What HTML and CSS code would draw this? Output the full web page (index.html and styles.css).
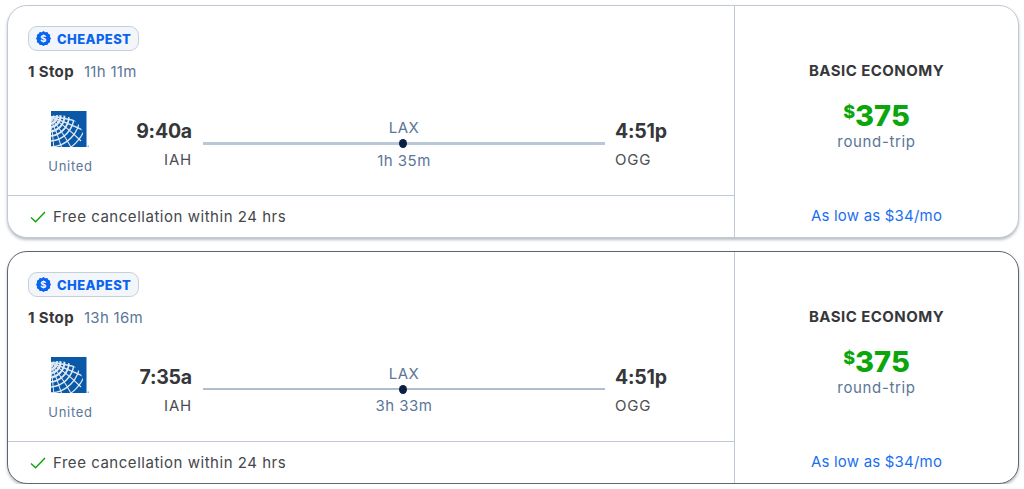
FILE: index.html
```html
<!DOCTYPE html>
<html lang="en">
<head>
<meta charset="utf-8">
<title>Flights</title>
<link rel="stylesheet" href="styles.css">
</head>
<body>
<svg class="defs" width="0" height="0" aria-hidden="true">
  <defs>
    <clipPath id="globe"><circle cx="8" cy="29" r="25"/></clipPath>
    <clipPath id="square"><rect width="35" height="36"/></clipPath>
    <symbol id="united" viewBox="0 0 38 38">
      <rect width="35" height="36" fill="#0a58a8"/>
      <rect x="35" width="1" height="36" fill="#7fa8d4"/>
      <rect x="36.5" y="34.5" width="1.5" height="1.5" fill="#8fb0d6"/>
      <g clip-path="url(#square)">
        <g clip-path="url(#globe)">
          <g fill="none" stroke="#dfe9f4">
            <circle cx="-2" cy="5" r="4" stroke-width="3"/>
            <circle cx="-2" cy="5" r="8" stroke-width="2.4"/>
            <circle cx="-2" cy="5" r="11.5" stroke-width="2.2"/>
            <circle cx="-2" cy="5" r="15.5" stroke-width="2"/>
            <circle cx="-2" cy="5" r="20" stroke-width="1.8"/>
            <circle cx="-2" cy="5" r="25" stroke-width="1.5"/>
            <circle cx="-2" cy="5" r="31" stroke-width="1.3"/>
            <circle cx="-2" cy="5" r="38" stroke-width="1.2"/>
            <path d="M-2 5Q12 7 36 12" stroke-width="1.6"/>
            <path d="M-2 5Q14 11 34 20" stroke-width="1.4"/>
            <path d="M-2 5Q14 14 30 30" stroke-width="1.2"/>
            <path d="M-2 5Q10 18 21 38" stroke-width="1.1"/>
            <path d="M-2 5Q6 20 11 38" stroke-width="1.1"/>
            <path d="M-2 5Q2 20 3 38" stroke-width="1"/>
          </g>
        </g>
      </g>
    </symbol>
    <symbol id="badge" viewBox="0 0 16 16">
      <path fill="#0a64f0" d="M8 0l1.9 1.2 2.2-.2 1 2 2 1-.2 2.2L16 8l-1.1 1.8.2 2.2-2 1-1 2-2.2-.2L8 16l-1.9-1.2-2.2.2-1-2-2-1 .2-2.2L0 8l1.1-1.8L.9 4l2-1 1-2 2.2.2z"/>
      <text x="8" y="11.6" text-anchor="middle" class="badge-dollar">$</text>
    </symbol>
  </defs>
</svg>

<main class="list">
  <article class="card card-plain">
    <div class="main">
      <div class="details">
        <span class="tag"><svg class="tag-icon"><use href="#badge"/></svg>CHEAPEST</span>
        <p class="summary"><b class="stops">1 Stop</b><span class="total">11h 11m</span></p>
        <div class="route">
          <div class="airline"><svg class="logo"><use href="#united"/></svg><span>United</span></div>
          <div class="point point-dep"><strong>9:40a</strong><span>IAH</span></div>
          <div class="leg">
            <span class="via">LAX</span>
            <div class="line"><i class="dot"></i></div>
            <span class="layover">1h 35m</span>
          </div>
          <div class="point"><strong>4:51p</strong><span>OGG</span></div>
        </div>
      </div>
      <div class="perk"><svg class="check" viewBox="0 0 16 12"><path d="M1 6.4l4.6 4.4L15 1"/></svg>Free cancellation within 24 hrs</div>
    </div>
    <aside class="fare">
      <h3>BASIC ECONOMY</h3>
      <div class="price"><sup>$</sup>375</div>
      <div class="trip">round-trip</div>
      <a class="finance">As low as $34/mo</a>
    </aside>
  </article>

  <article class="card card-hover">
    <div class="main">
      <div class="details">
        <span class="tag"><svg class="tag-icon"><use href="#badge"/></svg>CHEAPEST</span>
        <p class="summary"><b class="stops">1 Stop</b><span class="total">13h 16m</span></p>
        <div class="route">
          <div class="airline"><svg class="logo"><use href="#united"/></svg><span>United</span></div>
          <div class="point point-dep"><strong>7:35a</strong><span>IAH</span></div>
          <div class="leg">
            <span class="via">LAX</span>
            <div class="line"><i class="dot"></i></div>
            <span class="layover">3h 33m</span>
          </div>
          <div class="point"><strong>4:51p</strong><span>OGG</span></div>
        </div>
      </div>
      <div class="perk"><svg class="check" viewBox="0 0 16 12"><path d="M1 6.4l4.6 4.4L15 1"/></svg>Free cancellation within 24 hrs</div>
    </div>
    <aside class="fare">
      <h3>BASIC ECONOMY</h3>
      <div class="price"><sup>$</sup>375</div>
      <div class="trip">round-trip</div>
      <a class="finance">As low as $34/mo</a>
    </aside>
  </article>
</main>
</body>
</html>
```

FILE: styles.css
```css
* { box-sizing: border-box; }
html, body { margin: 0; background: #fff; }
body {
  font-family: Inter, "Open Sans", sans-serif;
  color: #36373a;
  overflow: hidden;
}
.defs { position: absolute; }
.badge-dollar { font: 700 10px Inter, sans-serif; fill: #fff; }
.list {
  display: flex;
  flex-direction: column;
  gap: 13px;
  padding: 5px 5px 0 7px;
}
.card {
  display: flex;
  height: 233px;
  background: #fff;
  border: 1px solid #c0cad6;
  border-radius: 20px;
  box-shadow: 0 2px 3px rgba(60, 70, 85, .35);
}
.card-hover { border-color: #5c6672; }
.main {
  flex: 1;
  display: flex;
  flex-direction: column;
  min-width: 0;
}
.details {
  flex: 1;
  padding: 20px 20px 0 20px;
}
.tag {
  display: inline-flex;
  align-items: center;
  gap: 6px;
  width: 111px;
  height: 25px;
  padding-left: 7px;
  background: #f2f6fb;
  border: 1px solid #c5d0dd;
  border-radius: 9px;
  font-size: 13px;
  font-weight: 800;
  letter-spacing: .4px;
  color: #0a64f0;
}
.tag-icon { width: 15px; height: 15px; flex: none; }
.summary {
  display: flex;
  gap: 10px;
  margin: 11px 0 0;
  font-size: 15px;
  line-height: 20px;
}
.stops { font-weight: 700; letter-spacing: .35px; }
.total { color: #5a7698; letter-spacing: .3px; }
.route {
  display: flex;
  margin-top: 29px;
}
.airline {
  width: 85px;
  display: flex;
  flex-direction: column;
  align-items: center;
  font-size: 13px;
  letter-spacing: .7px;
  color: #5a7698;
}
.logo { width: 38px; height: 38px; margin-right: 1px; }
.airline span { margin-top: 8px; line-height: 18px; }
.point {
  display: flex;
  flex-direction: column;
  width: 70px;
  padding-top: 7px;
  font-size: 15px;
  letter-spacing: .8px;
}
.point strong { font-size: 19.5px; font-weight: 700; line-height: 26px; letter-spacing: -.2px; white-space: nowrap; }
.point span { margin-top: 7px; line-height: 18px; color: #4b4d51; }
.point-dep {
  width: 79px;
  text-align: right;
}
.leg {
  width: 402px;
  margin: 8px 10px 0 11px;
  display: flex;
  flex-direction: column;
  align-items: center;
  font-size: 15px;
  letter-spacing: .5px;
  color: #5a7698;
}
.via { line-height: 18px; }
.line {
  align-self: stretch;
  position: relative;
  height: 3px;
  margin: 5px 0 7px;
  background: #b9c7d6;
}
.card-hover .line { height: 2px; background: #b0bdcc; }
.dot {
  position: absolute;
  left: 196px;
  top: -3px;
  width: 8px;
  height: 9px;
  border-radius: 50%;
  background: #0a1f44;
}
.layover { line-height: 18px; }
.perk {
  height: 42px;
  display: flex;
  align-items: center;
  gap: 7px;
  padding-left: 22px;
  border-top: 1px solid #c0cad6;
  font-size: 15px;
  letter-spacing: .53px;
  color: #45474b;
}
.check {
  width: 16px;
  height: 12px;
  fill: none;
  stroke: #0ca60c;
  stroke-width: 1.4;
}
.fare {
  width: 284px;
  flex: none;
  display: flex;
  flex-direction: column;
  align-items: center;
  border-left: 1px solid #c0cad6;
  padding-top: 55px;
}
.fare h3 {
  margin: 0;
  font-size: 15px;
  line-height: 20px;
  font-weight: 700;
  letter-spacing: .45px;
}
.price {
  margin-top: 17px;
  font-size: 29px;
  line-height: 35px;
  font-weight: 800;
  color: #0aa60a;
}
.price sup {
  font-size: 18px;
  font-weight: 800;
  line-height: 0;
  vertical-align: 8px;
}
.trip {
  font-size: 15px;
  line-height: 17px;
  letter-spacing: .65px;
  color: #5a7698;
}
.finance {
  margin-top: auto;
  margin-bottom: 12px;
  font-size: 15px;
  line-height: 18px;
  letter-spacing: .2px;
  color: #1a6ff0;
}
```
